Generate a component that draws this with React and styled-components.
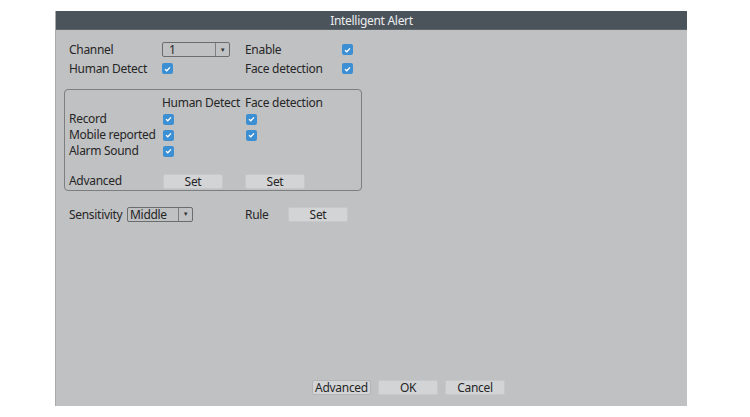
import React from "react";
import styled, { createGlobalStyle } from "styled-components";

const Global = createGlobalStyle`
  html, body {
    margin: 0;
    padding: 0;
    background: #ffffff;
  }
  body {
    font-family: "Noto Sans", "Open Sans", sans-serif;
    font-size: 12px;
    letter-spacing: -0.3px;
    color: #262626;
  }
`;

const Panel = styled.div`
  width: 632px;
  height: 395px;
  margin: 11px 0 0 55px;
  background: #c0c1c3;
  border-left: 1px solid #a9aaac;
  box-sizing: border-box;
  display: flex;
  flex-direction: column;
`;

const TitleBar = styled.div`
  height: 18px;
  background: #4b535b;
  color: #eceef0;
  display: flex;
  align-items: center;
  justify-content: center;
  font-size: 12px;
  border-bottom: 1px solid #5d656c;
`;

const Body = styled.div`
  padding: 10px 0 0 8px;
  display: flex;
  flex-direction: column;
`;

const Grid = styled.div`
  display: grid;
  grid-template-columns: 93px 83px 97px auto;
  grid-auto-rows: ${(p) => p.$row || 19}px;
  align-items: center;
  padding-left: ${(p) => p.$indent || 5}px;
`;

const Label = styled.span`
  white-space: nowrap;
  line-height: 14px;
`;

const Group = styled.div`
  width: 298px;
  height: 102px;
  box-sizing: border-box;
  margin-top: 11px;
  border: 1px solid #7d7e80;
  border-radius: 4px;
  padding-top: 5px;
  display: flex;
  flex-direction: column;
`;

const Spacer = styled.div`
  height: 14px;
`;

const Box = styled.span`
  width: 11px;
  height: 11px;
  border-radius: 2px;
  background: #3d8fd3;
  display: inline-flex;
  align-items: center;
  justify-content: center;
  margin-left: ${(p) => p.$shift || 0}px;
`;

const Check = ({ shift }) => (
  <Box $shift={shift}>
    <svg width="7" height="6" viewBox="0 0 7 6">
      <path d="M1 3.2 L2.8 4.8 L6 1.4" fill="none" stroke="#ffffff" strokeWidth="1.3" />
    </svg>
  </Box>
);

const Select = styled.div`
  width: ${(p) => p.$w}px;
  height: 15px;
  box-sizing: border-box;
  border: 1px solid #6b6c6e;
  border-radius: 2px;
  display: flex;
  align-items: center;
  font-size: 12px;
`;

const SelectText = styled.span`
  flex: 1;
  padding-left: ${(p) => p.$pad || 5}px;
  line-height: 13px;
`;

const Arrow = styled.span`
  width: 13px;
  height: 100%;
  border-left: 1px solid #7d7e80;
  display: flex;
  align-items: center;
  justify-content: center;
  font-size: 6px;
  color: #333;
`;

const Button = styled.div`
  width: ${(p) => p.$w || 60}px;
  height: 15px;
  box-sizing: border-box;
  background: #d3d4d6;
  border: 1px solid ${(p) => (p.$focus ? "#b3b4b6" : "#c7c8ca")};
  border-radius: 2px;
  display: flex;
  align-items: center;
  justify-content: center;
  font-size: 12px;
  margin-left: ${(p) => p.$shift || 0}px;
`;

const SensRow = styled.div`
  display: flex;
  align-items: center;
  height: 18px;
  margin-top: 14px;
  padding-left: 5px;
`;

const SensLabel = styled.span`
  width: 58px;
`;

const RuleLabel = styled.span`
  margin-left: 52px;
  width: 43px;
`;

const Footer = styled.div`
  margin-top: auto;
  padding: 0 0 11px 256px;
  display: flex;
  gap: 7px;
`;

export default function App() {
  return (
    <>
      <Global />
      <Panel>
        <TitleBar>Intelligent Alert</TitleBar>
        <Body>
          <Grid>
            <Label>Channel</Label>
            <Select $w={68}>
              <SelectText $pad={6}>1</SelectText>
              <Arrow>▼</Arrow>
            </Select>
            <Label>Enable</Label>
            <Check />
            <Label>Human Detect</Label>
            <Check />
            <Label>Face detection</Label>
            <Check />
          </Grid>
          <Group>
            <Grid $row={16} $indent={4}>
              <span />
              <Label>Human Detect</Label>
              <Label>Face detection</Label>
              <span />
              <Label>Record</Label>
              <Check shift={1} />
              <Check shift={1} />
              <span />
              <Label>Mobile reported</Label>
              <Check shift={1} />
              <Check shift={1} />
              <span />
              <Label>Alarm Sound</Label>
              <Check shift={1} />
              <span />
              <span />
            </Grid>
            <Spacer />
            <Grid $row={16} $indent={4}>
              <Label>Advanced</Label>
              <Button $shift={1}>Set</Button>
              <Button>Set</Button>
              <span />
            </Grid>
          </Group>
          <SensRow>
            <SensLabel>Sensitivity</SensLabel>
            <Select $w={66}>
              <SelectText $pad={2}>Middle</SelectText>
              <Arrow>▼</Arrow>
            </Select>
            <RuleLabel>Rule</RuleLabel>
            <Button>Set</Button>
          </SensRow>
        </Body>
        <Footer>
          <Button $w={59} $focus>Advanced</Button>
          <Button $w={60}>OK</Button>
          <Button $w={60}>Cancel</Button>
        </Footer>
      </Panel>
    </>
  );
}
